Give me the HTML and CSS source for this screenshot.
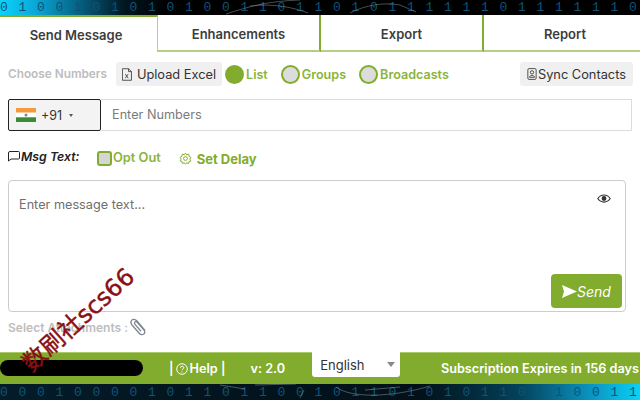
FILE: index.html
```html
<!DOCTYPE html>
<html lang="en">
<head>
  <meta charset="UTF-8" />
  <title>Send Message</title>
  <link rel="stylesheet" href="styles.css">
</head>
<body>
  <div class="strip strip-top">
    <div class="digits">0 1 0 0 1 0 1 0 1 0 1 0 0 1 1 0 1 1 0 1 0 1 1 1 1 1 1 0 1 1 1 1 1 1 0</div>
    <svg class="swirl" width="640" height="15" viewBox="0 0 640 15" fill="none" stroke="#8a9aa0" stroke-width="0.5">
      <path d="M226 14C250 6 270 1 300 0M250 6C275 3 295 8 308 13M350 13C365 5 385 2 400 5L416 12"/>
    </svg>
  </div>

  <div class="tabs">
    <div class="tab active">Send Message</div>
    <div class="tab">Enhancements</div>
    <div class="tab">Export</div>
    <div class="tab">Report</div>
  </div>

  <div class="main">
    <div class="row choose-row">
      <span class="muted">Choose Numbers</span>
      <button class="btn upload">
        <svg width="12" height="15" viewBox="0 0 12 15" fill="none" stroke="#333" stroke-width="1"><path d="M.5 .5H8L11.500 4V14.500H.5ZM8 .5V4H11.500"/><path d="M4 7L7.500 12M7.500 7L4 12"/></svg>
        Upload Excel
      </button>
      <span class="radio on"></span><span class="opt">List</span>
      <span class="radio"></span><span class="opt">Groups</span>
      <span class="radio"></span><span class="opt">Broadcasts</span>
      <button class="btn sync">
        <svg width="12" height="14" viewBox="0 0 12 14" fill="none" stroke="#333" stroke-width="1"><rect x="1" y=".5" width="10" height="13" rx="1.500"/><circle cx="6" cy="5" r="2"/><path d="M3 11C3 8 9 8 9 11Z"/></svg>Sync Contacts
      </button>
    </div>

    <div class="phone-row">
      <div class="country">
        <svg class="flag" width="20" height="14" viewBox="0 0 20 14"><rect width="20" height="4.700" fill="#f59a3c"/><rect y="4.700" width="20" height="4.600" fill="#fff"/><rect y="9.300" width="20" height="4.700" fill="#3d8b37"/><circle cx="10" cy="7" r="1.500" fill="#7a86a8"/></svg>
        <span>+91</span>
        <span class="caret"></span>
      </div>
      <div class="numbers">Enter Numbers</div>
    </div>

    <div class="row msg-row">
      <span class="msg-label">
        <svg width="12" height="11" viewBox="0 0 12 11" fill="none" stroke="#222" stroke-width="1"><path d="M2 .5H10.500Q11.500 .5 11.500 1.500V7Q11.500 8 10.500 8H3L.5 10V2Q.5 .5 2 .5Z"/></svg>Msg Text:
      </span>
      <span class="check"></span><span class="opt optout">Opt Out</span>
      <span class="delay">
        <svg width="13" height="13" viewBox="0 0 24 24" fill="none" stroke="#82ac2e" stroke-width="1.800"><circle cx="12" cy="12" r="3.500"/><path d="M12 2L14 5L18 4L18.500 8L22 10L20 13L22 16.500L18.500 17.500L18 21L14 20L12 22.500L10 20L6 21L5.500 17.500L2 16.500L4 13L2 10L5.500 8L6 4L10 5Z"/></svg>
        Set Delay
      </span>
    </div>

    <div class="message">
      <div class="placeholder">Enter message text...</div>
      <svg class="eye" width="14" height="11" viewBox="0 0 14 11" fill="none" stroke="#333" stroke-width="1.200"><path d="M.8 5.500C4 .8 10 .8 13.200 5.500C10 10.200 4 10.200 .8 5.500Z"/><circle cx="7" cy="5.500" r="1.800" fill="#333"/></svg>
      <button class="send">
        <svg width="15" height="13" viewBox="0 0 15 13" fill="#fff"><path d="M0 0L15 6.500L0 13L2 6.500Z"/></svg>Send
      </button>
    </div>

    <div class="attach">
      <span>Select Attachments :</span>
      <svg width="17" height="18" viewBox="0 0 17 18" fill="none" stroke="#7d8791" stroke-width="1.300"><path d="M15 12.500L7 3C5 .8 2.500 1 1.500 2.500C.5 4 .8 5.500 2 7L9 15C10.500 17 12.500 17 13.800 16C15 15 15 13.500 14 12L7.500 4.500C6.500 3.500 5.300 3.500 4.800 4.200C4.200 5 4.500 5.800 5.200 6.600L11 13.300"/></svg>
    </div>
  </div>

  <div class="footer">
    <div class="redacted"></div>
    <div class="help">| <svg width="12" height="12" viewBox="0 0 12 12" fill="none" stroke="#fff"><circle cx="6" cy="6" r="5.300"/><path d="M4.300 4.700C4.300 2.800 7.800 2.800 7.800 4.700C7.800 6 6 5.800 6 7.300M6 8.500V9.500"/></svg>Help |</div>
    <div class="version">v: 2.0</div>
    <div class="lang"><span>English</span><span class="caret grey"></span></div>
    <div class="expires">Subscription Expires in 156 days</div>
  </div>

  <div class="strip strip-bottom">
    <div class="digits">0 0 0 1 0 0 0 0 1 0 1 1 0 1 1 0 0 1 0 1 1 0 1 0 1 0 1 1 0 1 1 0 0 1 1</div>
    <svg class="swirl" width="640" height="16" viewBox="0 0 640 16" fill="none" stroke="#8a9aa0" stroke-width="0.5">
      <path d="M220 1L245 5M255 1L296 0M300 14L304 6M336 3C350 14 390 14 430 2M365 6L400 3"/>
    </svg>
  </div>

  <div class="watermark">数刷社scs66</div>
</body>
</html>
```

FILE: styles.css
```css
* {
  box-sizing: border-box;
}
html, body {
  margin: 0;
  height: 400px;
  overflow: hidden;
}
body {
  position: relative;
  display: flex;
  flex-direction: column;
  background: #fff;
  font-family: "Inter", "Liberation Sans", sans-serif;
  font-size: 13px;
  color: #333;
}
button {
  font-family: inherit;
  border: none;
}

/* binary backdrop */
.strip {
  position: relative;
  overflow: hidden;
  flex: none;
}
.strip-top {
  height: 15px;
  background: linear-gradient(90deg, #08d4fb 0, #0aa8d8 35px, #055f80 80px, #02161f 125px, #000 170px);
}
.strip-bottom {
  height: 16px;
  background: linear-gradient(90deg, #041d2b 0, #03151f 190px, #021019 420px, #04425c 520px, #0a93c0 590px, #0bd0f5 640px);
}
.digits {
  position: absolute;
  left: 0;
  white-space: nowrap;
  font-family: "Liberation Mono", monospace;
  font-size: 13px;
  line-height: 12px;
  word-spacing: 2.900px;
  color: #0e5478;
}
.strip-top .digits {
  top: 2px;
}
.strip-bottom .digits {
  top: 3px;
}
.swirl {
  position: absolute;
  left: 0;
  top: 0;
}

/* tabs */
.tabs {
  display: flex;
  height: 37px;
  flex: none;
}
.tab {
  width: 163px;
  padding-top: 11px;
  border-bottom: 2px solid #b5cf85;
  border-right: 2px solid #82ac2e;
  text-align: center;
  font-size: 13px;
  font-weight: 600;
  color: #3d3d3d;
}
.tab:last-child {
  width: 156px;
  padding-left: 6px;
  border-right: none;
}
.tab.active {
  width: 158px;
  padding-top: 10px;
  padding-right: 5px;
  border-top: 2px solid #82ac2e;
  border-bottom: none;
  border-right: 1px solid #b5cf85;
}

.main {
  flex: 1;
  padding: 10px 8px 0;
}
.row {
  display: flex;
  align-items: center;
}
.muted {
  font-size: 11.800px;
  font-weight: 600;
  color: #bdbdbd;
}
.btn {
  display: flex;
  align-items: center;
  height: 24px;
  border-radius: 3px;
  background: #f0f0f0;
  font-size: 12.800px;
  color: #333;
}
.upload {
  gap: 5px;
  margin: 0 0 0 9px;
  width: 106px;
  padding: 0 6px;
  white-space: nowrap;
}
.sync {
  gap: 1px;
  margin-left: auto;
  margin-right: -1px;
  width: 113px;
  padding: 0 7px;
  white-space: nowrap;
}
.choose-row {
  height: 24px;
}
.radio {
  flex: none;
  width: 19px;
  height: 19px;
  margin-left: 3px;
  border: 2px solid #82ac2e;
  border-radius: 50%;
  background: #dcdcdc;
}
.radio.on {
  background: #82ac2e;
}
.opt {
  margin-left: 2px;
  margin-right: 10px;
  font-size: 12.600px;
  font-weight: 600;
  color: #8ab43c;
}

/* phone */
.phone-row {
  display: flex;
  height: 32px;
  margin-top: 13px;
}
.country {
  display: flex;
  align-items: center;
  width: 93px;
  padding-left: 7px;
  border: 1px solid #222;
  border-radius: 2px;
  background: #f3f3f3;
  font-size: 12.500px;
}
.flag {
  margin-right: 5px;
}
.caret {
  width: 0;
  height: 0;
  margin-left: 7px;
  border-left: 2.500px solid transparent;
  border-right: 2.500px solid transparent;
  border-top: 3px solid #555;
}
.numbers {
  flex: 1;
  padding: 7px 11px;
  border: 1px solid #dcdcdc;
  border-left: none;
  font-size: 12.700px;
  color: #7b7b7b;
}

.msg-row {
  height: 26px;
  margin-top: 14px;
}
.msg-label {
  display: flex;
  align-items: center;
  gap: 1px;
  width: 89px;
  margin-top: -4px;
  font-size: 12.300px;
  font-weight: 600;
  font-style: italic;
  color: #222;
}
.check {
  flex: none;
  width: 15px;
  height: 15px;
  border: 2px solid #82ac2e;
  border-radius: 3px;
  background: #d5d5d5;
}
.optout {
  margin-left: 1px;
  margin-right: 18px;
  margin-top: -1px;
  font-size: 12.800px;
}
.delay {
  display: flex;
  align-items: center;
  gap: 5px;
  margin-top: 1px;
  font-size: 13px;
  font-weight: 700;
  color: #82ac2e;
}

/* message box */
.message {
  position: relative;
  width: 618px;
  height: 132px;
  margin-top: 9px;
  border: 1px solid #ccc;
  border-radius: 4px;
}
.placeholder {
  padding: 16px 10px;
  font-size: 12.700px;
  color: #6f6f6f;
}
.eye {
  position: absolute;
  top: 12px;
  right: 14px;
}
.send {
  position: absolute;
  right: 3px;
  bottom: 3px;
  display: flex;
  align-items: center;
  justify-content: center;
  width: 71px;
  height: 34px;
  border-radius: 4px;
  background: #82ac2e;
  color: #fff;
  font-size: 14px;
  font-style: italic;
}

.attach {
  display: flex;
  align-items: center;
  gap: 2px;
  margin-top: 6px;
  font-size: 12px;
  font-weight: 600;
  color: #bdbdbd;
}

/* footer */
.footer {
  display: flex;
  flex: none;
  height: 32px;
  padding-top: 1px;
  border-top: 1px solid #a9c96a;
  background: #82ac2e;
  color: #fff;
  font-size: 12.700px;
  font-weight: 600;
}
.redacted {
  width: 143px;
  height: 16px;
  margin-top: 6px;
  border-radius: 8px;
  background: #000;
}
.help {
  display: flex;
  align-items: center;
  gap: 2px;
  height: 29px;
  margin-left: 26px;
}
.version {
  height: 29px;
  margin-left: 25px;
  line-height: 29px;
}
.lang {
  display: flex;
  align-items: center;
  justify-content: space-between;
  width: 88px;
  height: 25px;
  margin-top: -2px;
  margin-left: 27px;
  padding: 0 5px 0 8px;
  border-radius: 0 0 3px 3px;
  background: #fff;
  color: #333;
  font-size: 13px;
  font-weight: 400;
}
.caret.grey {
  border-left-width: 4px;
  border-right-width: 4px;
  border-top: 5px solid #888;
}
.expires {
  flex: 1;
  height: 29px;
  line-height: 29px;
  text-align: right;
  padding-right: 1px;
  white-space: nowrap;
}

/* lies over the page */
.watermark {
  position: absolute;
  left: 8px;
  top: 306px;
  transform: rotate(-42deg);
  white-space: nowrap;
  font-family: "DejaVu Sans", "Noto Sans CJK SC", sans-serif;
  font-size: 24px;
  line-height: 28px;
  color: #8b0f14;
  -webkit-text-stroke: 0.4px #8b0f14;
}
```
